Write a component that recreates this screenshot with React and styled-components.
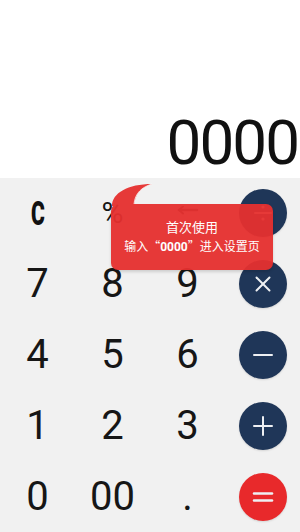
import * as React from 'react'
import styled, { createGlobalStyle } from 'styled-components'

const GlobalStyle = createGlobalStyle`
  html, body {
    margin: 0;
    padding: 0;
    background: #f2f2f2;
  }
  body {
    font-family: Roboto, 'Noto Sans CJK SC', sans-serif;
  }
`

const Screen = styled.div`
  width: 300px;
  height: 532px;
  display: flex;
  flex-direction: column;
  position: relative;
  overflow: hidden;
`

const Display = styled.div`
  height: 178px;
  background: #ffffff;
  display: flex;
  align-items: flex-end;
  justify-content: flex-end;
  padding-bottom: 4px;
  padding-right: 2px;
  box-sizing: border-box;
`

const DisplayValue = styled.div`
  font-size: 62px;
  line-height: 62px;
  color: #111;
  letter-spacing: -2px;
`

const Keypad = styled.div`
  flex: 1;
  background: #f1f1f1;
  display: grid;
  grid-template-columns: repeat(4, 75px);
  grid-template-rows: repeat(5, 1fr);
`

const Key = styled.div`
  display: flex;
  align-items: center;
  justify-content: center;
  font-size: ${(p) => (p.$small ? '30px' : '40px')};
  color: #161616;
  line-height: 1;
`

const ClearLabel = styled.span`
  display: inline-block;
  font-size: 33px;
  font-weight: 900;
  color: #111;
  transform: scaleX(0.64);
`

const OpCircle = styled.div`
  width: 48px;
  height: 48px;
  border-radius: 50%;
  background: ${(p) => (p.$red ? '#e8292b' : '#1f3658')};
  display: flex;
  align-items: center;
  justify-content: center;
  box-shadow: 0 1px 2px rgba(0, 0, 0, 0.12);
`

const Bubble = styled.div`
  position: absolute;
  left: 111px;
  top: 183px;
  width: 162px;
  opacity: 0.95;
`

const BubbleTail = styled.svg`
  display: block;
  margin-left: 1px;
  margin-bottom: -2px;
`

const BubbleBody = styled.div`
  background: #e6302f;
  border-radius: 7px;
  height: 66px;
  display: flex;
  flex-direction: column;
  align-items: center;
  justify-content: center;
  gap: 5px;
  color: #fff;
  font-size: 12px;
  line-height: 14px;
  font-family: 'Noto Sans CJK SC', sans-serif;
  box-shadow: 0 2px 3px rgba(0, 0, 0, 0.15);
`

const TitleLine = styled.div`
  font-size: 13px;
`

const Strong = styled.b`
  font-weight: 700;
  font-family: Roboto, 'Noto Sans CJK SC', sans-serif;
`

const stroke = { stroke: '#eef0f3', strokeWidth: 2, strokeLinecap: 'round', fill: 'none' }

function OpIcon({ type }) {
  return (
    <svg width="22" height="22" viewBox="0 0 22 22">
      {type === 'div' && (
        <g>
          <line x1="3" y1="11" x2="19" y2="11" {...stroke} />
          <circle cx="11" cy="5" r="1.6" fill="#eef0f3" />
          <circle cx="11" cy="17" r="1.6" fill="#eef0f3" />
        </g>
      )}
      {type === 'mul' && (
        <g>
          <line x1="4.5" y1="4.5" x2="17.5" y2="17.5" {...stroke} />
          <line x1="17.5" y1="4.5" x2="4.5" y2="17.5" {...stroke} />
        </g>
      )}
      {type === 'minus' && <line x1="2" y1="11" x2="20" y2="11" {...stroke} />}
      {type === 'plus' && (
        <g>
          <line x1="2" y1="11" x2="20" y2="11" {...stroke} />
          <line x1="11" y1="2" x2="11" y2="20" {...stroke} />
        </g>
      )}
      {type === 'eq' && (
        <g>
          <line x1="2" y1="7.5" x2="20" y2="7.5" {...stroke} strokeWidth="2.5" />
          <line x1="2" y1="14.5" x2="20" y2="14.5" {...stroke} strokeWidth="2.5" />
        </g>
      )}
    </svg>
  )
}

function BackIcon() {
  return (
    <svg width="22" height="14" viewBox="0 0 22 14">
      <line x1="2" y1="4" x2="20" y2="4" stroke="#333" strokeWidth="2.5" strokeLinecap="round" />
      <path d="M6 0.5 L2 4 L6 7.5" fill="none" stroke="#333" strokeWidth="2" strokeLinecap="round" />
    </svg>
  )
}

export default function App() {
  return (
    <Screen>
      <GlobalStyle />
      <Display>
        <DisplayValue>0000</DisplayValue>
      </Display>
      <Keypad>
        <Key>
          <ClearLabel>C</ClearLabel>
        </Key>
        <Key $small>%</Key>
        <Key>
          <BackIcon />
        </Key>
        <Key>
          <OpCircle>
            <OpIcon type="div" />
          </OpCircle>
        </Key>

        <Key>7</Key>
        <Key>8</Key>
        <Key>9</Key>
        <Key>
          <OpCircle>
            <OpIcon type="mul" />
          </OpCircle>
        </Key>

        <Key>4</Key>
        <Key>5</Key>
        <Key>6</Key>
        <Key>
          <OpCircle>
            <OpIcon type="minus" />
          </OpCircle>
        </Key>

        <Key>1</Key>
        <Key>2</Key>
        <Key>3</Key>
        <Key>
          <OpCircle>
            <OpIcon type="plus" />
          </OpCircle>
        </Key>

        <Key>0</Key>
        <Key>00</Key>
        <Key>.</Key>
        <Key>
          <OpCircle $red>
            <OpIcon type="eq" />
          </OpCircle>
        </Key>
      </Keypad>

      <Bubble>
        <BubbleTail width="44" height="23" viewBox="0 0 44 23">
          <path d="M0 23 C0 10 16 1 40 1 C30 4 23 10 22 23 Z" fill="#e6302f" />
          <path d="M40 1 C30 4 23 10 22 21" fill="none" stroke="rgba(255,255,255,0.7)" strokeWidth="1" />
        </BubbleTail>
        <BubbleBody>
          <TitleLine>首次使用</TitleLine>
          <div>
            输入“<Strong>0000</Strong>”进入设置页
          </div>
        </BubbleBody>
      </Bubble>
    </Screen>
  )
}
